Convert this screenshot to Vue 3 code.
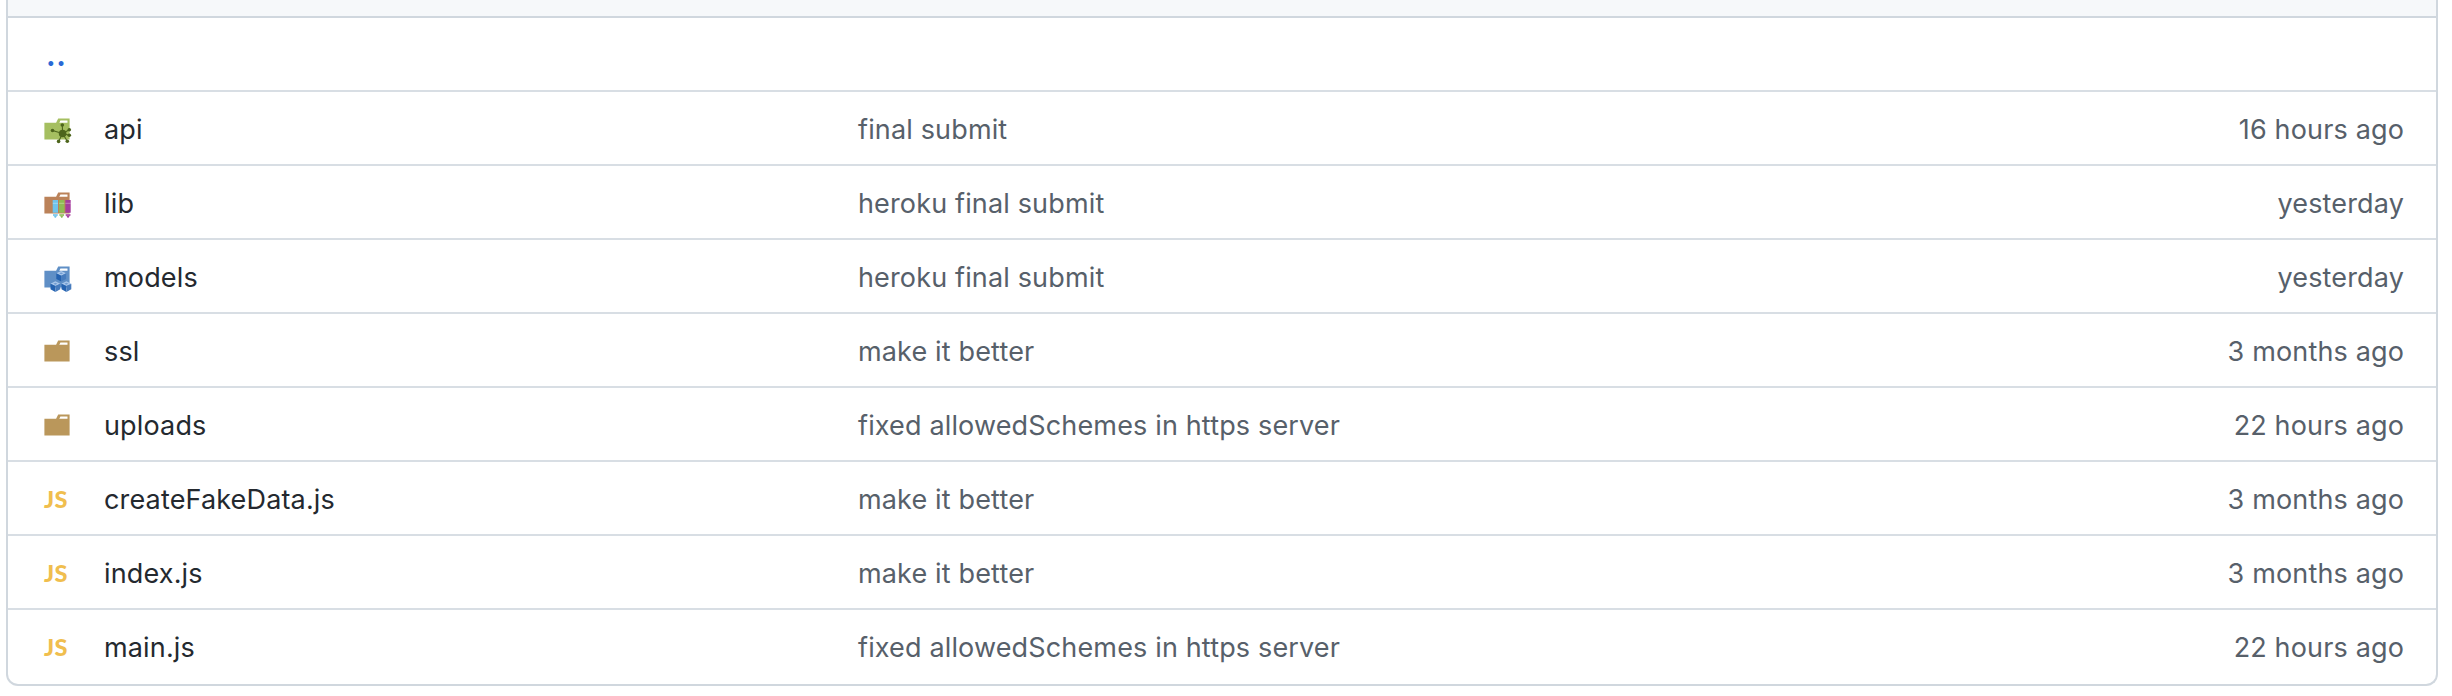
<script setup>
const rows = [
  { icon: 'api', name: 'api', message: 'final submit', age: '16 hours ago' },
  { icon: 'lib', name: 'lib', message: 'heroku final submit', age: 'yesterday' },
  { icon: 'models', name: 'models', message: 'heroku final submit', age: 'yesterday' },
  { icon: 'folder', name: 'ssl', message: 'make it better', age: '3 months ago' },
  { icon: 'folder', name: 'uploads', message: 'fixed allowedSchemes in https server', age: '22 hours ago' },
  { icon: 'js', name: 'createFakeData.js', message: 'make it better', age: '3 months ago' },
  { icon: 'js', name: 'index.js', message: 'make it better', age: '3 months ago' },
  { icon: 'js', name: 'main.js', message: 'fixed allowedSchemes in https server', age: '22 hours ago' },
]
const folderColor = { api: '#a5bf60', lib: '#bb8259', models: '#5f8fc6', folder: '#ba975b' }
const cubes = [[21.2, 15.2], [15.4, 25.6], [26.4, 25.6]]
const books = [[12.7, '#6fc3ec'], [19.1, '#8fbb54'], [25.4, '#a53c9e']]
const spokes = [[22.3, 12], [29.3, 16.8], [29.3, 22.3], [27.3, 28.2], [18.6, 28.4], [12.5, 17.5]]
</script>

<template>
  <main class="listing">
    <div class="head"></div>
    <div class="row parent"><a class="up">..</a></div>
    <div v-for="row in rows" :key="row.name" class="row">
      <div class="icon">
        <span v-if="row.icon === 'js'" class="js">JS</span>
        <svg v-else viewBox="0 0 32 32" width="32" height="32">
          <path
            d="M27.5 5.5h-9.3l-2.1 4.2H4.4v16.8h25.2v-21Zm0 4.2h-8.2l1.1-2.1h7.1Z"
            :fill="folderColor[row.icon]"
          />
          <g v-if="row.icon === 'api'" fill="#4d651c" stroke="#4d651c">
            <line v-for="(s, i) in spokes" :key="'l' + i" x1="22.6" y1="20.5" :x2="s[0]" :y2="s[1]" stroke-width="1.1" />
            <circle v-for="(s, i) in spokes" :key="'c' + i" :cx="s[0]" :cy="s[1]" r="1.8" stroke="none" />
            <circle cx="22.6" cy="20.5" r="3.8" stroke="none" />
          </g>
          <g v-if="row.icon === 'lib'">
            <g v-for="b in books" :key="b[0]" :transform="`translate(${b[0]} 0)`">
              <path d="M0 13h5.3v12.8H0zM.3 27h4.7v1.8l-1.3.6-.4 1.3H2l-.4-1.3L.3 28.8z" :fill="b[1]" />
              <path d="M0 16.3h5.3M.5 27.9h4.3" stroke="#fff" stroke-opacity=".38" stroke-width=".9" />
            </g>
          </g>
          <g v-if="row.icon === 'models'">
            <g v-for="(c, i) in cubes" :key="i" :transform="`translate(${c[0]} ${c[1]})`">
              <path d="M0-5.3 4.9-2.9 0-.5-4.9-2.9z" fill="#a9c6ea" />
              <path d="M0-3.8 2-2.9 0-1.9-2-2.9z" fill="#6f9bd0" />
              <path d="M-4.9-2.9 0-.5v5.8l-4.9-2.6z" fill="#2462b0" />
              <path d="M4.9-2.9 0-.5v5.8l4.9-2.6z" fill="#467bbd" />
            </g>
          </g>
        </svg>
      </div>
      <div class="name">{{ row.name }}</div>
      <div class="message">{{ row.message }}</div>
      <div class="age">{{ row.age }}</div>
    </div>
  </main>
</template>

<style>
body {
  background: #fff;
}
</style>

<style scoped>
.listing {
  box-sizing: border-box;
  width: 2432px;
  height: 686px;
  margin-left: 6px;
  border: 2px solid #d0d7de;
  border-top: 0;
  border-radius: 0 0 12px 12px;
  overflow: hidden;
  font-family: Inter, "Liberation Sans", sans-serif;
  font-size: 27px;
  line-height: 42px;
  letter-spacing: 0.15px;
}
.head {
  height: 16px;
  background: #f6f8fa;
}
.row {
  box-sizing: border-box;
  height: 74px;
  display: grid;
  grid-template-columns: 64px 754px 1fr 400px;
  align-items: center;
  padding: 0 32px;
  border-top: 2px solid #d8dee4;
  color: #57606a;
  white-space: nowrap;
}
.parent {
  border-top-color: #d0d7de;
}
.up {
  padding: 0 0 1px 7px;
  font-family: Lato, sans-serif;
  font-weight: 700;
  font-size: 32px;
  letter-spacing: 2.6px;
  color: #2969d6;
}
.icon {
  height: 32px;
  padding-top: 2px;
}
.icon svg {
  display: block;
}
.js {
  display: block;
  padding-left: 4px;
  font: 900 23.5px/32px Lato, sans-serif;
  letter-spacing: 0.4px;
  color: #f0be4e;
}
.name,
.message,
.age {
  padding-top: 3px;
}
.name {
  color: #24292f;
}
.age {
  text-align: right;
}
</style>
